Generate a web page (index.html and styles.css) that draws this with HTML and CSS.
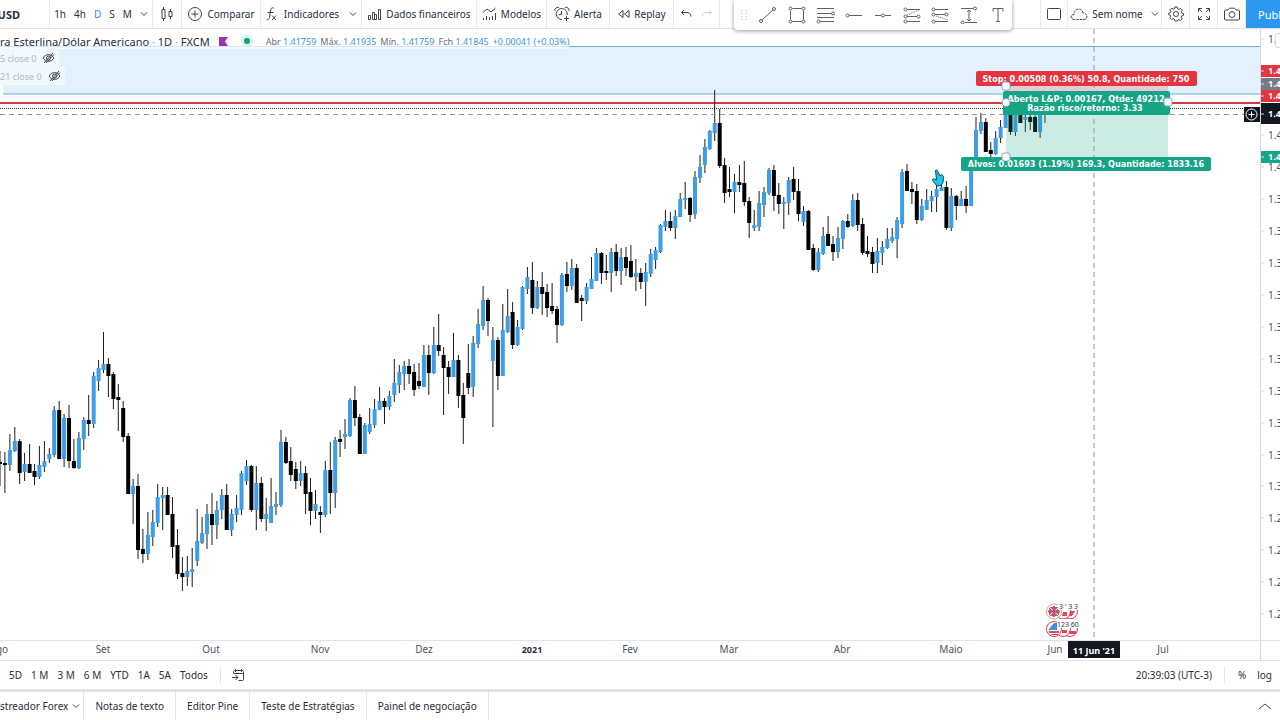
FILE: index.html
```html
<!DOCTYPE html>
<html lang="pt">
<head>
    <meta charset="UTF-8">
    <meta name="viewport" content="width=device-width, initial-scale=1.0">
    <title>Libra Esterlina/Dólar Americano</title>
    <link rel="stylesheet" href="styles.css">
</head>
<body>
    <header class="toolbar">
        <button class="cell symbol">PUSD</button>
        <div class="cell intervals">
            <button>1h</button>
            <button>4h</button>
            <button class="active">D</button>
            <button>S</button>
            <button>M</button>
            <button aria-label="Intervalos"><svg width="8" height="6" viewBox="0 0 8 6"><path d="M1 1.5l3 3 3-3"/></svg></button>
        </div>
        <button class="cell candle-btn" aria-label="Velas">
            <svg width="14" height="16" viewBox="0 0 14 16"><path d="M2 3.500h3v9H2zM3.500 1v2.500M3.500 12.500V15M9 5.500h3v5H9zM10.500 3v2.500M10.500 10.500V13"/></svg>
        </button>
        <button class="cell compare">
            <svg width="16" height="16" viewBox="0 0 16 16"><circle cx="8" cy="8" r="6.500"/><path d="M8 4.500v7M4.500 8h7"/></svg>
            Comparar
        </button>
        <div class="cell indicators">
            <button>
                <svg width="14" height="16" viewBox="0 0 14 16"><path d="M9 2.500C7.500 1 6 2 5.700 4L4.500 11.500c-.3 2-1.500 2.500-3 1.700M2.500 6.500h6M7 9.500l4 4.500M11 9.500L7 14"/></svg>
                Indicadores
            </button>
            <button aria-label="Favoritos"><svg width="8" height="6" viewBox="0 0 8 6"><path d="M1 1.500l3 3 3-3"/></svg></button>
        </div>
        <button class="cell financials">
            <svg width="15" height="14" viewBox="0 0 15 14"><path d="M1.500 8.500h2v4h-2zM5.500 5.500h2v7h-2zM7.500 7.500h2v5h-2zM11.500 2.500h2v10h-2z"/></svg>
            Dados financeiros
        </button>
        <button class="cell models">
            <svg width="15" height="14" viewBox="0 0 15 14"><path d="M1 5.500l4-3.500 4 3 4.500-4M1.500 13v-2M4.500 13V9M7.500 13v-3M10.500 13V9M13.500 13V6"/></svg>
            Modelos
        </button>
        <button class="cell alert">
            <svg width="16" height="16" viewBox="0 0 16 16"><path d="M13.200 9A5.500 5.500 0 1 0 8 13.500M7.500 5v3.500H5M1 5a3 3 0 0 1 4-3.500M11 1.500A3 3 0 0 1 15 5M12.500 10v5M10 12.500h5"/></svg>
            Alerta
        </button>
        <button class="cell replay">
            <svg width="13" height="10" viewBox="0 0 13 10"><path d="M6 1.500v7L1.500 5zM12 1.500v7L7.500 5z"/></svg>
            Replay
        </button>
        <div class="cell history">
            <button aria-label="Desfazer"><svg width="12" height="10" viewBox="0 0 12 10"><path d="M4 1L1.500 3.500 4 6M1.500 3.500H7c2.500 0 4 1.500 4 4"/></svg></button>
            <button class="off" aria-label="Refazer"><svg width="12" height="10" viewBox="0 0 12 10"><path d="M8 1l2.500 2.500L8 6M10.500 3.500H5c-2.500 0-4 1.500-4 4"/></svg></button>
        </div>
        <div class="spacer"></div>
        <button class="cell square layout" aria-label="Layout"><svg width="16" height="14" viewBox="0 0 16 14"><rect x="1.500" y="1.500" width="13" height="11" rx="1"/></svg></button>
        <button class="cell unnamed">
            <svg width="18" height="14" viewBox="0 0 18 14"><path stroke-dasharray="2.500 1" d="M4.500 12.500C0 12.500 0 7.500 4 7.500 4 1 12 0 13 6c5 0 5 6.500 1 6.500z"/></svg>
            Sem nome
            <svg class="caret" width="8" height="6" viewBox="0 0 8 6"><path d="M1 1.500l3 3 3-3"/></svg>
        </button>
        <button class="cell square" aria-label="Configurações"><svg width="16" height="16" viewBox="0 0 16 16"><circle cx="8" cy="8" r="2.500"/><path d="M6.800 1h2.400l.5 1.900 1.200.5 1.700-1 1.700 1.700-1 1.700.5 1.200 1.700.5v1.800l-1.800.6-.5 1.200 1 1.700-1.700 1.700-1.700-1-1.200.5L9.200 15H6.800l-.5-1.900-1.200-.5-1.700 1-1.700-1.700 1-1.700-.5-1.200L.7 8.700V7.200l1.700-.5.5-1.200-1-1.700 1.700-1.700 1.700 1L6.300 2.900z"/></svg></button>
        <button class="cell square" aria-label="Tela cheia"><svg width="14" height="14" viewBox="0 0 14 14"><path d="M1.500 5V1.500H5M1.500 1.500l3.500 3.500M9 1.500h3.500V5M12.500 1.500L9 5M1.500 9v3.500H5M1.500 12.500L5 9M12.500 9v3.500H9M12.500 12.500L9 9"/></svg></button>
        <button class="cell square" aria-label="Foto"><svg width="18" height="14" viewBox="0 0 18 14"><path d="M2.500 3H5l1.500-1.800h5L13 3h2.500c.6 0 1 .4 1 1v8c0 .6-.4 1-1 1h-13c-.6 0-1-.4-1-1V4c0-.6.4-1 1-1z"/><circle cx="9" cy="7.500" r="3"/></svg></button>
        <button class="publish">Publ</button>
    </header>

    <div class="drawing-tools">
        <svg class="grip" width="8" height="12" viewBox="0 0 8 12"><path d="M1 1.500h1M1 4.500h1M1 7.500h1M1 10.500h1M6 1.500h1M6 4.500h1M6 7.500h1M6 10.500h1"/></svg>
        <button aria-label="Linha"><svg width="18" height="18" viewBox="0 0 18 18"><path d="M3 14L14 4"/><circle cx="2" cy="15" r="1.500"/><circle cx="15" cy="3" r="1.500"/></svg></button>
        <button aria-label="Retângulo"><svg width="18" height="18" viewBox="0 0 18 18"><path d="M4.500 2.500h9M4.500 15.500h9M2.500 4.500v9M15.500 4.500v9"/><circle cx="2.500" cy="2.500" r="1.500"/><circle cx="15.500" cy="2.500" r="1.500"/><circle cx="2.500" cy="15.500" r="1.500"/><circle cx="15.500" cy="15.500" r="1.500"/></svg></button>
        <button aria-label="Fibonacci"><svg width="20" height="18" viewBox="0 0 20 18"><path d="M1 2.500h17M1 7.500h14M1 11.500h17M4 15.500h14"/><circle cx="17" cy="7.500" r="1.500"/><circle cx="2.500" cy="15.500" r="1.500"/></svg></button>
        <button aria-label="Raio horizontal"><svg width="18" height="18" viewBox="0 0 18 18"><path d="M4 9.500h13"/><circle cx="2.500" cy="9.500" r="1.500"/></svg></button>
        <button aria-label="Linha horizontal"><svg width="18" height="18" viewBox="0 0 18 18"><path d="M1 9.500h6M11 9.500h6"/><circle cx="9" cy="9.500" r="1.500"/></svg></button>
        <button aria-label="Posição comprada"><svg width="18" height="18" viewBox="0 0 18 18"><path d="M4 3.500h13M4 10.500h10M4 15.500h13"/><path stroke-dasharray="1 1" d="M4 9l12-5"/><circle cx="2.500" cy="3.500" r="1.500"/><circle cx="2.500" cy="10.500" r="1.500"/><circle cx="15.500" cy="10.500" r="1.500"/><circle cx="2.500" cy="15.500" r="1.500"/></svg></button>
        <button aria-label="Posição vendida"><svg width="18" height="18" viewBox="0 0 18 18"><path d="M4 3.500h13M4 8.500h10M4 15.500h13"/><path stroke-dasharray="1 1" d="M5 10l12 4"/><circle cx="2.500" cy="3.500" r="1.500"/><circle cx="2.500" cy="8.500" r="1.500"/><circle cx="15.500" cy="8.500" r="1.500"/><circle cx="2.500" cy="15.500" r="1.500"/></svg></button>
        <button aria-label="Faixa de preço"><svg width="18" height="18" viewBox="0 0 18 18"><path d="M1 2.500h12M5 16.500h12M9 4v11M7 6l2-2 2 2M7 13l2 2 2-2"/><circle cx="15" cy="2.500" r="1.500"/><circle cx="2.500" cy="16.500" r="1.500"/></svg></button>
        <button aria-label="Texto"><svg width="14" height="16" viewBox="0 0 14 16"><path d="M2 4.500v-3h10v3M7 1.500v13M5 14.500h4"/></svg></button>
    </div>

    <main class="workspace">
        <section class="pane">
            <svg class="chart" viewBox="0 29 1260 611" preserveAspectRatio="xMinYMin meet">
                <rect class="zone" x="0" y="46" width="1260" height="48"/>
                <path class="zone-line" d="M0 46.500h1260M0 94h1260"/>
                <path class="stop-line" d="M0 103h1260"/>
                <path class="price-line" d="M0 108.500h1260"/>
                <g id="candles"></g>
                <rect class="risk" x="1006" y="86" width="162" height="16"/>
                <rect class="reward" x="1006" y="102" width="162" height="55"/>
                <path class="cross" d="M0 114.500h1260M1094 29v611"/>

                <g class="tag">
                    <rect class="red" x="976" y="71" width="221" height="15" rx="2"/>
                    <text x="1086" y="82">Stop: 0.00508 (0.36%) 50.8, Quantidade: 750</text>
                    <rect class="green" x="1003" y="91" width="167" height="24" rx="2"/>
                    <text x="1086" y="102">Aberto L&amp;P: 0.00167, Qtde: 49212</text>
                    <text x="1085" y="111">Razão risco/retorno: 3.33</text>
                    <rect class="green" x="961" y="157" width="250" height="14" rx="2"/>
                    <text x="1086" y="167">Alvos: 0.01693 (1.19%) 169.3, Quantidade: 1833.16</text>
                </g>
                <g class="handle">
                    <rect x="1002" y="82" width="8" height="8" rx="2"/>
                    <circle cx="1006" cy="102.500" r="4"/>
                    <rect x="1164" y="98" width="8" height="8" rx="2"/>
                    <rect x="1002" y="153" width="8" height="8" rx="2"/>
                </g>

                <!-- hand cursor -->
                <path class="hand" d="M935.500 170.500c1.500-1 2 0 2.500 1.500l2 4 1.500-1.500 1.500 1 .5 2-.5 5-2 3-4 .5-4.500-5.500c-.5-1.500 1-2 2-1.500l2 1z"/>

                <!-- plus button on the crosshair -->
                <rect class="dark" x="1244" y="107" width="16" height="15"/>
                <g class="plus"><circle cx="1251.500" cy="114.500" r="5.500"/><path d="M1251.500 111.500v6M1248.500 114.500h6"/></g>

                <!-- economic events -->
                <g class="events">
                    <circle cx="1070" cy="611.500" r="7.500"/>
                    <circle cx="1063" cy="611.500" r="7.500"/>
                    <circle class="orange" cx="1054" cy="611.500" r="7.500"/>
                    <path class="uk-blue" d="M1049 607h10v9h-10z"/>
                    <path class="cross-white" d="M1049 607l10 9M1059 607l-10 9"/>
                    <path class="flag-red" d="M1053 606h2v11h-2zM1048 610.500h12v2h-12zM1063 612h4v4h-5zM1070 611h5l-3 5h-3z"/>
                    <circle cx="1070" cy="629" r="7.500"/>
                    <circle cx="1063" cy="629" r="7.500"/>
                    <circle cx="1054" cy="629" r="7.500"/>
                    <path class="us-blue" d="M1049 629l5-6h3v7h-8z"/>
                    <path class="flag-red" d="M1049 631h10v2h-10zM1051 634h7v1h-7zM1062 630h5v3h-5zM1069 631h7v3h-7z"/>
                    <rect class="count" x="1058" y="602" width="21" height="8" rx="1"/>
                    <rect class="count" x="1057" y="619" width="24" height="9" rx="1"/>
                    <text x="1059" y="609">3 ' 3 3</text>
                    <text x="1057" y="627">123 60</text>
                </g>
            </svg>

            <div class="legend">
                <div class="title-row">
                    <h1>ra Esterlina/Dólar Americano <i>·</i> 1D <i>·</i> FXCM</h1>
                    <svg width="9" height="9" viewBox="0 0 9 9"><path class="flag" d="M0 0h9L6 4.500 9 9H0z"/></svg>
                    <span class="status"></span>
                    <p class="ohlc"><span>Abr <b>1.41759</b></span><span>Máx. <b>1.41935</b></span><span>Mín. <b>1.41759</b></span><span>Fch <b>1.41845</b></span><b>+0.00041 (+0.03%)</b></p>
                </div>
                <div class="study">
                    5 close 0
                    <button aria-label="Mostrar"><svg width="13" height="12" viewBox="0 0 13 12"><path d="M1 6c2.500-4.500 8.500-4.500 11 0-2.500 4.500-8.500 4.500-11 0zM2 11l9-10M4 11l8-8.500"/><circle cx="6.500" cy="6" r="2"/></svg></button>
                </div>
                <div class="study">
                    21 close 0
                    <button aria-label="Mostrar"><svg width="13" height="12" viewBox="0 0 13 12"><path d="M1 6c2.500-4.500 8.500-4.500 11 0-2.500 4.500-8.500 4.500-11 0zM2 11l9-10M4 11l8-8.500"/><circle cx="6.500" cy="6" r="2"/></svg></button>
                </div>
                <button class="collapse" aria-label="Recolher"></button>
            </div>
        </section>
        <svg class="price-scale" id="price-scale" viewBox="1261 29 19 611" preserveAspectRatio="xMinYMin meet"></svg>
    </main>

    <div class="time-row">
        <svg class="time-scale" id="time-scale" viewBox="0 641 1260 20" preserveAspectRatio="xMinYMin meet"></svg>
        <div class="corner"></div>
    </div>

    <div class="range-bar">
        <button>5D</button>
        <button>1 M</button>
        <button>3 M</button>
        <button>6 M</button>
        <button>YTD</button>
        <button>1A</button>
        <button>5A</button>
        <button>Todos</button>
        <button class="goto" aria-label="Ir para"><svg width="14" height="14" viewBox="0 0 14 14"><path d="M2.500 5V3.500c0-.6.400-1 1-1h8c.6 0 1 .4 1 1v8c0 .6-.4 1-1 1h-4M2.500 5.500h10M4.500 1v3M10.500 1v3M1 9.500h6M4.500 7l2.500 2.500L4.500 12"/></svg></button>
        <div class="spacer"></div>
        <button class="clock">20:39:03 (UTC-3)</button>
        <button class="percent">%</button>
        <button>log</button>
    </div>

    <nav class="tabs">
        <button class="first">streador Forex <svg width="8" height="6" viewBox="0 0 8 6"><path d="M1 1.500l3 3 3-3"/></svg></button>
        <button>Notas de texto</button>
        <button>Editor Pine</button>
        <button>Teste de Estratégias</button>
        <button>Painel de negociação</button>
        <div class="spacer"></div>
        <button class="expand" aria-label="Abrir painel"><svg width="14" height="8" viewBox="0 0 14 8"><path d="M1 7l6-5 6 5"/></svg></button>
    </nav>

    <script src="chart.js"></script>
</body>
</html>
```
FILE: styles.css
```css
* {
    box-sizing: border-box;
}

body {
    margin: 0;
    height: 100vh;
    display: flex;
    flex-direction: column;
    overflow: hidden;
    position: relative;
    background: #fff;
    color: #2a2e39;
    font-family: "Trebuchet MS", "Noto Sans", sans-serif;
    font-size: 10px;
}

button {
    display: flex;
    align-items: center;
    justify-content: center;
    padding: 0;
    border: 0;
    background: none;
    color: inherit;
    font: inherit;
    white-space: nowrap;
    cursor: pointer;
}

svg {
    flex: none;
    fill: none;
    stroke: #40434e;
}

.spacer {
    flex: 1;
}

/* top toolbar */
.toolbar {
    display: flex;
    flex: none;
    height: 29px;
    border-bottom: 1px solid #e0e3eb;
}

.cell {
    display: flex;
    align-items: center;
    justify-content: center;
    flex: none;
    gap: 4px;
    border-right: 1px solid #e8eaf0;
}

.symbol {
    width: 50px;
    padding-right: 29px;
    justify-content: flex-end;
    overflow: hidden;
    font-size: 11px;
    font-weight: bold;
}

.intervals {
    width: 103px;
    gap: 8px;
}

.active {
    color: #2f8fe6;
}

.candle-btn {
    width: 29px;
}

.compare {
    width: 79px;
}

.indicators {
    width: 101px;
    gap: 10px;
}

.indicators button {
    gap: 5px;
}

.financials {
    width: 115px;
}

.models {
    width: 70px;
}

.alert {
    width: 63px;
}

.replay {
    width: 64px;
}

.history {
    width: 46px;
    gap: 9px;
}

.off {
    opacity: 0.25;
}

.square {
    width: 28px;
}

.layout {
    border-left: 1px solid #e8eaf0;
}

.unnamed {
    width: 94px;
}

.caret {
    margin-left: 4px;
}

.publish {
    width: 34px;
    padding-left: 12px;
    justify-content: flex-start;
    overflow: hidden;
    background: #2c98f0;
    color: #fff;
    font-size: 11px;
}

/* floating drawing tools */
.drawing-tools {
    position: absolute;
    top: 0;
    right: 268px;
    z-index: 2;
    width: 278px;
    height: 30px;
    display: flex;
    align-items: center;
    padding-left: 6px;
    background: #fff;
    border-radius: 0 0 4px 4px;
    box-shadow: 0 1px 4px rgba(0, 0, 0, 0.4);
}

.drawing-tools button {
    flex: 1;
}

.drawing-tools svg {
    stroke: #5d606b;
}

.drawing-tools .grip {
    margin-right: 6px;
    stroke: #b5b8c0;
}

/* chart */
.workspace {
    display: flex;
    flex: 1;
    min-height: 0;
}

.pane {
    position: relative;
    flex: 1;
    min-width: 0;
}

.chart {
    display: block;
    width: 100%;
    height: 100%;
}

.zone {
    fill: #e3f1fc;
    stroke: none;
}

.zone-line {
    stroke: #6cade6;
}

.stop-line {
    stroke: #d9363e;
    stroke-width: 2;
}

.price-line {
    stroke: #333;
    stroke-dasharray: 1 1;
}

.cross {
    stroke: #94979f;
    stroke-dasharray: 5 4;
}

.wick {
    stroke: #1c1c1c;
}

.up {
    fill: #3c9de8;
    stroke: none;
}

.down {
    fill: #000;
    stroke: none;
}

.risk {
    fill: rgba(229, 57, 70, 0.2);
    stroke: none;
}

.reward {
    fill: rgba(22, 165, 130, 0.22);
    stroke: none;
}

.tag {
    stroke: none;
    text-anchor: middle;
    font-family: "DejaVu Sans Condensed", Tahoma, sans-serif;
    font-size: 9px;
    font-weight: bold;
}

.tag text {
    fill: #fff;
}

.red {
    fill: #e3343f;
    stroke: none;
}

.green {
    fill: #16a584;
    stroke: none;
}

.gray {
    fill: #787b86;
    stroke: none;
}

.dark {
    fill: #131722;
    stroke: none;
}

.handle {
    fill: #fff;
    stroke: #7fa8dc;
}

.hand {
    fill: #19c5e8;
    stroke: #0d4c5c;
}

.plus {
    stroke: #fff;
}

.events circle {
    fill: #fff;
    stroke: #e8365d;
}

.events .orange {
    stroke: #f29a4a;
}

.uk-blue {
    fill: #7b6cae;
    stroke: none;
}

.cross-white {
    stroke: #fff;
}

.us-blue {
    fill: #3f8fd8;
    stroke: none;
}

.flag-red {
    fill: #e5445f;
    stroke: none;
}

.count {
    fill: #fff;
    stroke: none;
}

.events text {
    fill: #333;
    stroke: none;
    font-size: 7px;
}

/* legend over the chart */
.legend {
    position: absolute;
    top: 4px;
    left: 0;
    display: flex;
    flex-direction: column;
    align-items: flex-start;
}

.title-row {
    display: flex;
    align-items: center;
    height: 16px;
    background: rgba(255, 255, 255, 0.7);
}

.title-row h1 {
    margin: 0 9px 0 0;
    font-size: 11px;
    font-weight: normal;
}

.title-row i {
    color: #9a9da6;
    font-style: normal;
}

.flag {
    fill: #9c33b4;
    stroke: none;
}

.status {
    width: 12px;
    height: 12px;
    margin: 0 13px;
    border: 3px solid #d9f1ea;
    border-radius: 50%;
    background: #12a17c;
}

.ohlc {
    display: flex;
    gap: 4px;
    margin: 0;
    color: #6a6d78;
    font-size: 9px;
}

.ohlc b {
    color: #3b94dd;
    font-weight: normal;
}

.study {
    display: flex;
    align-items: center;
    gap: 6px;
    height: 18px;
    padding-right: 4px;
    background: rgba(255, 255, 255, 0.5);
    color: #b5bac2;
    font-size: 9px;
}

.collapse {
    width: 3px;
    height: 12px;
    background: #fff;
    border-radius: 0 3px 3px 0;
}

/* scales */
.price-scale {
    width: 20px;
    height: 100%;
    border-left: 1px solid #d5d8e0;
}

.price-scale text,
.time-scale text {
    fill: #50535e;
    stroke: none;
    font-size: 10px;
}

.price-scale .light,
.time-scale .light {
    fill: #fff;
    font-size: 9px;
    font-weight: bold;
}

.time-scale text {
    text-anchor: middle;
}

.time-scale .year {
    fill: #2a2e39;
    font-size: 9px;
    font-weight: bold;
}

.tick {
    stroke: #d5d8e0;
}

.time-row {
    display: flex;
    flex: none;
    height: 21px;
    border-top: 1px solid #e0e3eb;
    border-bottom: 1px solid #e0e3eb;
}

.time-scale {
    flex: 1;
    min-width: 0;
    height: 20px;
}

.corner {
    width: 20px;
    border-left: 1px solid #d5d8e0;
}

/* ranges */
.range-bar {
    display: flex;
    align-items: center;
    flex: none;
    gap: 9px;
    height: 28px;
    padding: 0 8px 0 9px;
}

.goto {
    height: 16px;
    padding-left: 10px;
    margin-left: 3px;
    border-left: 1px solid #e0e3eb;
}

.clock {
    height: 16px;
    padding-right: 12px;
    border-right: 1px solid #e0e3eb;
}

.percent {
    margin: 0 2px 0 4px;
}

/* bottom tabs */
.tabs {
    display: flex;
    flex: none;
    height: 31px;
    border-top: 3px solid #e0e3eb;
}

.tabs button {
    padding: 0 11px;
    border-right: 1px solid #e0e3eb;
}

.tabs .first {
    gap: 4px;
    padding: 0 3px 0 0;
}

.tabs .expand {
    padding: 0 8px;
    border: 0;
}
```
FILE: chart.js
```js
// one row per day: high, body top, body bottom, low, 1 = up / 0 = down
const days = [
    [451,462,463,486,0],[452,463,464,493,0],[434,450,464,471,1],[427,441,450,452,1],[439,441,472,484,0],
    [453,464,471,481,1],[444,464,472,473,0],[464,471,476,485,0],[446,465,476,479,1],[441,461,466,472,1],
    [448,454,458,463,1],[406,410,454,457,1],[401,410,458,458,0],[414,418,458,467,1],[405,418,460,468,0],
    [439,461,467,469,0],[432,438,467,469,1],[417,420,438,450,1],[395,420,423,436,0],[372,376,423,428,1],
    [360,368,380,391,1],[332,364,369,373,1],[358,364,375,397,0],[372,374,398,409,0],[384,397,399,431,0],
    [401,408,436,442,0],[433,436,493,493,0],[479,486,493,524,1],[474,486,549,559,0],[529,549,553,563,0],
    [512,535,553,560,1],[510,522,536,546,1],[484,497,522,527,1],[487,495,497,530,1],[487,495,514,515,0],
    [497,514,546,558,0],[529,545,573,579,0],[557,573,576,591,0],[556,571,576,586,1],[548,569,571,587,1],
    [509,541,560,566,1],[517,533,542,544,1],[504,514,533,549,1],[493,514,524,545,0],[501,510,524,539,1],
    [489,495,509,519,1],[484,495,529,529,0],[509,514,529,536,1],[495,508,514,522,1],[471,473,509,515,1],
    [460,466,480,485,1],[465,466,509,512,0],[466,483,509,530,1],[477,483,518,522,0],[498,514,518,531,1],
    [478,506,522,522,1],[492,504,506,515,1],[430,442,504,507,1],[437,442,462,464,0],[447,461,474,481,0],
    [462,469,480,489,0],[461,473,480,486,1],[466,473,493,514,0],[478,492,510,525,0],[490,504,510,519,1],
    [506,512,514,533,0],[461,470,514,517,1],[442,470,492,514,0],[437,440,492,508,1],[430,439,441,457,0],
    [419,434,436,449,1],[398,400,435,437,1],[386,400,417,426,0],[414,417,453,453,0],[423,425,453,453,1],
    [408,424,431,434,1],[399,409,424,428,1],[387,401,409,410,1],[398,401,406,424,0],[391,396,406,410,1],
    [359,383,394,402,1],[365,372,384,393,1],[361,366,373,390,1],[359,366,373,384,0],[364,372,389,396,0],
    [363,381,385,389,0],[345,355,386,387,1],[345,355,372,395,0],[327,345,372,374,1],[314,345,350,356,0],
    [347,355,367,415,0],[361,367,376,394,0],[333,360,376,377,1],[355,360,395,408,0],[383,395,417,444,0],
    [344,373,387,394,0],[336,343,386,397,1],[309,324,343,348,1],[286,300,325,330,1],[298,300,320,336,0],
    [327,340,360,427,1],[337,340,375,390,0],[304,330,375,376,1],[289,316,331,333,1],[302,312,344,349,0],
    [320,327,344,346,1],[286,287,328,330,1],[267,277,288,294,1],[262,280,307,314,0],[281,287,307,309,1],
    [272,287,293,315,0],[284,292,307,317,0],[283,306,310,314,0],[306,309,324,343,0],[273,275,324,326,1],
    [262,274,285,292,0],[259,268,285,290,1],[264,268,302,303,0],[295,298,300,321,0],[283,287,300,304,1],
    [257,279,288,289,1],[248,253,280,281,1],[252,253,272,284,0],[255,271,272,280,0],[248,252,272,292,1],
    [244,252,270,276,0],[248,257,270,285,1],[247,257,267,276,0],[245,261,276,278,0],[259,273,276,291,1],
    [268,273,281,289,0],[263,272,281,306,1],[249,254,273,277,1],[247,250,259,269,1],[224,225,251,253,1],
    [210,221,226,231,1],[212,221,227,231,0],[210,216,227,239,1],[193,199,216,216,1],[182,198,199,209,1],
    [197,198,214,222,0],[171,177,213,219,1],[155,167,177,183,1],[139,147,164,173,1],[130,131,148,150,1],
    [90,123,132,141,1],[109,123,165,168,0],[158,165,192,203,0],[167,189,191,197,0],[174,182,191,213,1],
    [165,182,184,192,0],[161,183,201,206,0],[197,201,222,238,0],[210,225,227,231,1],[191,203,226,231,1],
    [187,192,204,217,1],[168,170,192,195,1],[165,170,195,211,0],[183,195,203,214,0],[197,202,203,229,1],
    [177,180,202,215,1],[167,179,191,200,0],[179,191,213,221,0],[206,211,221,226,1],[210,211,249,250,0],
    [244,248,269,271,0],[248,252,269,272,1],[227,236,253,255,1],[216,234,245,246,0],[236,244,251,261,0],
    [227,238,251,258,1],[220,221,238,249,1],[214,221,226,228,0],[194,200,225,227,1],[193,200,224,231,0],
    [218,224,252,255,0],[236,251,253,257,0],[247,252,263,273,0],[238,251,262,273,1],[241,247,252,265,1],
    [228,239,247,249,1],[228,237,240,243,1],[217,220,238,258,1],[169,172,223,228,1],[164,171,190,191,0],
    [182,189,191,204,0],[184,191,219,224,0],[199,206,219,221,1],[189,200,209,210,1],[191,196,200,212,1],
    [170,189,196,212,1],[178,187,190,191,1],[181,187,227,230,0],[188,196,227,231,1],[195,196,205,220,0],
    [191,199,205,206,1],[186,199,205,213,0],[168,170,205,206,1],[117,130,170,170,1],[113,122,130,134,1],
    [118,122,151,152,0],[142,150,153,157,0],[131,138,153,155,1],[120,127,137,143,1],[108,112,127,128,1],
    [110,113,131,135,0],[110,113,131,136,1],[110,113,122,123,0],[110,117,119,132,1],[112,117,121,130,0],
    [112,117,131,131,0],[110,113,131,138,1],[110,113,114,123,1]
];

const lastX = 1045;
const step = lastX / (days.length - 1);

document.getElementById('candles').innerHTML = days.map(([high, top, bottom, low, up], i) => {
    const x = (i * step).toFixed(1);
    return `<path class="wick" d="M${x} ${high}V${low}"/>` +
        `<rect class="${up ? 'up' : 'down'}" x="${x - 2}" y="${top}" width="4" height="${bottom - top + 1}"/>`;
}).join('');

// price scale
let scale = '';
const price = (y, text, cls) => `<path class="tick" d="M1261 ${y}h3"/><text class="${cls || ''}" x="1268" y="${y + (cls ? 3 : 4)}">${text}</text>`;

scale += price(39, '1.') + '<rect class="tick" x="1275.5" y="33.5" width="10" height="14" rx="2"/>';
for (let i = 0; i < 16; i++) {
    const y = Math.round(135 + i * 31.95);
    scale += price(y, i < 2 ? '1.4' : i < 12 ? '1.3' : '1.2');
}

const marks = [[71, 12, 'red'], [84, 13, 'gray'], [96, 12, 'red'], [114, 21, 'dark'], [157, 12, 'green']];
for (const [y, height, color] of marks) {
    const top = color === 'dark' ? 103 : y - 6;
    scale += `<rect class="${color}" x="1261" y="${top}" width="19" height="${height}"/>` + price(y, '1.4', 'light');
}
document.getElementById('price-scale').innerHTML = scale;

// time scale
const months = [[2, 'go'], [103, 'Set'], [211, 'Out'], [320, 'Nov'], [424, 'Dez'], [532, '2021', 'year'], [630, 'Fev'],
    [729, 'Mar'], [842, 'Abr'], [951, 'Maio'], [1055, 'Jun'], [1163, 'Jul']];

document.getElementById('time-scale').innerHTML = months.map(([x, text, cls]) =>
    `<path class="tick" d="M${x} 641v2"/><text class="${cls || ''}" x="${x}" y="653">${text}</text>`
).join('') + '<rect class="dark" x="1068" y="640" width="52" height="18"/><text class="light" x="1094" y="654">11 Jun \'21</text>';
```
